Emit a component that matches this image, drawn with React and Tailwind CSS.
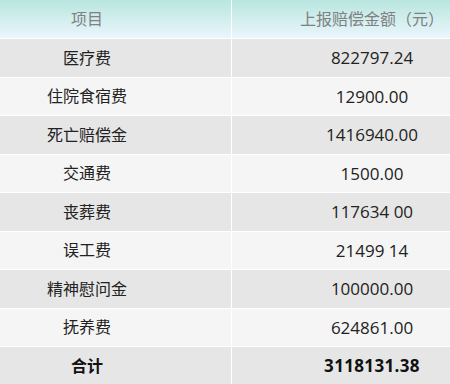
export default function App() {
  const rows = [
    ["医疗费", "822797.24"],
    ["住院食宿费", "12900.00"],
    ["死亡赔偿金", "1416940.00"],
    ["交通费", "1500.00"],
    ["丧葬费", "117634 00"],
    ["误工费", "21499 14"],
    ["精神慰问金", "100000.00"],
    ["抚养费", "624861.00"],
  ];
  const font = { fontFamily: '"Open Sans", "Noto Sans CJK SC", sans-serif' };
  return (
    <div className="w-[450px] h-[384px] bg-white flex flex-col gap-px overflow-hidden text-[16px]" style={font}>
      <div className="h-[38px] shrink-0 flex gap-px text-[#808080]">
        <div className="w-[231px] flex items-center justify-center pr-[57px] bg-gradient-to-b from-[#b9e6df] to-[#eaf6fc]">项目</div>
        <div className="flex-1 flex items-center justify-center pl-[62px] bg-gradient-to-b from-[#b9e6df] to-[#eaf6fc]">上报赔偿金额（元）</div>
      </div>
      {rows.map(([a, b], i) => (
        <div key={a} className="h-[37.5px] shrink-0 flex gap-px text-[#222]">
          <div className={`w-[231px] flex items-center justify-center pr-[57px] ${i % 2 === 0 ? "bg-[#e6e6e6]" : "bg-[#f5f5f5]"}`}>{a}</div>
          <div className={`flex-1 flex items-center justify-center pl-[62px] text-[17px] ${i % 2 === 0 ? "bg-[#e6e6e6]" : "bg-[#f5f5f5]"}`}>{b}</div>
        </div>
      ))}
      <div className="flex-1 flex gap-px text-[#111] font-bold">
        <div className="w-[231px] flex items-center justify-center pr-[57px] bg-[#e6e6e6]">合计</div>
        <div className="flex-1 flex items-center justify-center pl-[62px] text-[17px] tracking-[0.35px] bg-[#e6e6e6]">3118131.38</div>
      </div>
    </div>
  );
}
